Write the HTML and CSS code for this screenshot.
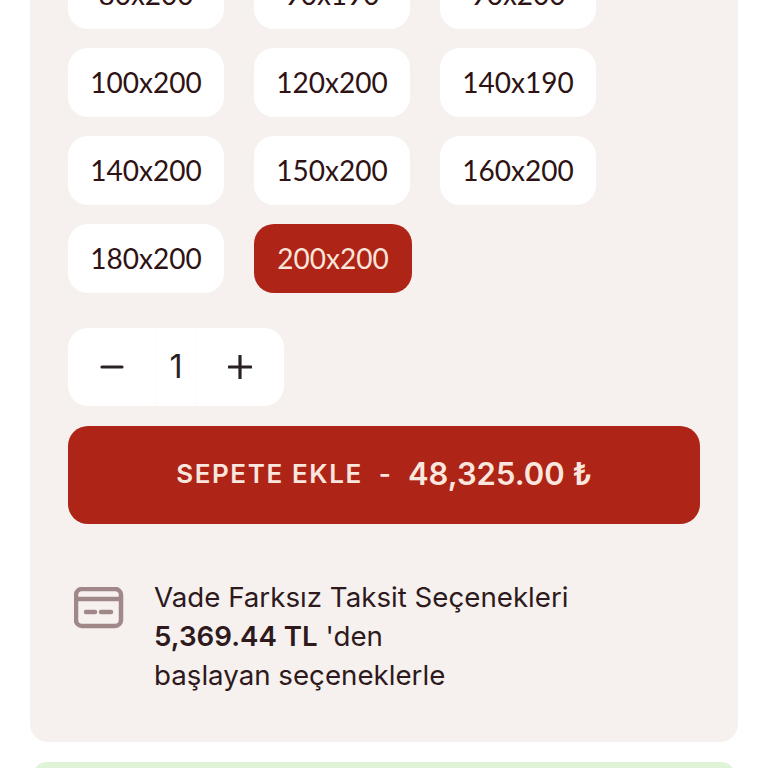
FILE: index.html
```html
<!DOCTYPE html>
<html lang="tr">
<head>
<meta charset="utf-8">
<title>Ürün</title>
<link rel="stylesheet" href="styles.css">
</head>
<body>
<main class="page">
  <section class="panel">
    <div class="sizes">
      <button class="size">80x200</button>
      <button class="size">90x190</button>
      <button class="size">90x200</button>
      <button class="size">100x200</button>
      <button class="size">120x200</button>
      <button class="size">140x190</button>
      <button class="size">140x200</button>
      <button class="size">150x200</button>
      <button class="size">160x200</button>
      <button class="size">180x200</button>
      <button class="size selected">200x200</button>
    </div>
    <div class="qty">
      <button class="qty-btn" aria-label="Azalt">
        <svg width="24" height="24" viewBox="0 0 24 24"><path d="M2 12H22" class="qty-stroke"/></svg>
      </button>
      <span class="qty-val">1</span>
      <button class="qty-btn" aria-label="Artır">
        <svg width="24" height="24" viewBox="0 0 24 24"><path d="M1 12H23M12 1V23" class="qty-stroke"/></svg>
      </button>
    </div>
    <button class="add">
      <span class="add-label">SEPETE EKLE</span>
      <span class="add-dash">-</span>
      <span class="add-price">48,325.00 ₺</span>
    </button>
    <div class="info">
      <svg class="card" width="50" height="42" viewBox="0 0 50 42">
        <rect x="2" y="2" width="45" height="37" rx="6" class="card-line"/>
        <path d="M2 12H47" class="card-line"/>
        <path d="M12 25H21M27 25H37" class="card-line"/>
      </svg>
      <p class="info-text">Vade Farksız Taksit Seçenekleri<br><strong>5,369.44 TL</strong> 'den<br>başlayan seçeneklerle</p>
    </div>
  </section>
  <div class="green"></div>
</main>
</body>
</html>
```
FILE: styles.css
```css
* { box-sizing: border-box; }
html, body { margin: 0; padding: 0; background: #fff; }
body { height: 768px; overflow: hidden; }
.page { margin-top: -80px; padding: 0 30px; }
.panel {
  background: #f6f1ef;
  border-radius: 0 0 18px 18px;
  padding: 40px 38px 48px;
  height: 822px;
}
.sizes {
  display: grid;
  grid-template-columns: repeat(3, 156px);
  column-gap: 30px;
  row-gap: 19px;
  justify-content: start;
}
.size {
  height: 69px;
  width: 156px;
  border: 0;
  border-radius: 20px;
  background: #fff;
  color: #2e1214;
  font: 400 28px/1 "Lato", sans-serif;
  padding: 0 0 2px;
}
.size.selected { width: 158px; background: #ae2417; color: #fbe4da; }
.qty { display: flex; margin-top: 35px; width: 216px; height: 78px; }
.qty-btn {
  width: 88px;
  border: 0;
  background: #fff;
  padding: 0;
  display: flex;
  align-items: center;
  justify-content: center;
}
.qty-btn:first-child { border-radius: 20px 0 0 20px; }
.qty-btn:last-child { border-radius: 0 20px 20px 0; }
.qty-val {
  width: 40px;
  background: #fff;
  text-align: center;
  font: 400 32px/78px "Inter", sans-serif;
  color: #2a2222;
  border-left: 1px solid #fdfbfa;
  border-right: 1px solid #fdfbfa;
}
.qty-stroke { fill: none; stroke: #2a2222; stroke-width: 3.200; stroke-linecap: round; }
.add {
  display: flex;
  align-items: center;
  justify-content: center;
  width: 632px;
  height: 98px;
  margin-top: 20px;
  border: 0;
  border-radius: 20px;
  background: #ae2417;
  color: #fbe6dd;
  font-family: "Inter", sans-serif;
  padding: 0 0 3px;
}
.add-label { font-size: 26px; font-weight: 600; letter-spacing: 1.600px; }
.add-dash { font-size: 26px; font-weight: 600; margin: 0 17px 0 16px; }
.add-price { font-size: 31px; font-weight: 600; }
.info { display: flex; align-items: flex-start; margin-top: 54px; }
.card { margin: 9px 0 0 6px; flex: none; }
.card-line { fill: none; stroke: #a08788; stroke-width: 4.500; stroke-linecap: round; }
.info-text {
  margin: 0 0 0 31px;
  font: 400 27.700px/39px "Inter", sans-serif;
  color: #2e1a1c;
  margin-left: 30px;
}
.info-text strong { font-weight: 600; }
.green {
  height: 40px;
  margin: 20px 3px 0;
  background: #dff3d8;
  border-radius: 14px 14px 0 0;
}
```
